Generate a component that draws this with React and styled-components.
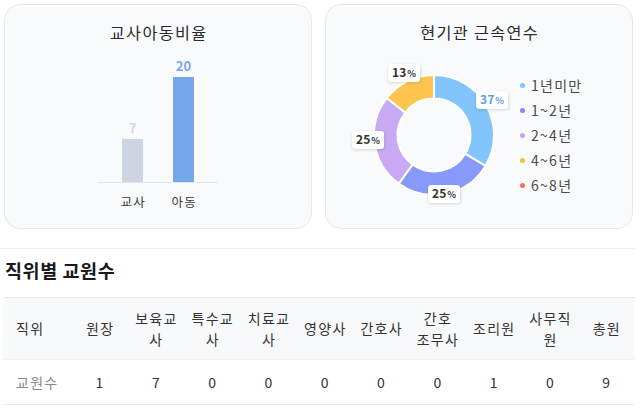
import styled, { createGlobalStyle } from "styled-components";

const GlobalStyle = createGlobalStyle`
    body {
        margin: 0;
        background: #ffffff;
        font-family: "Noto Sans CJK KR", "Noto Sans", sans-serif;
        letter-spacing: 0.08em;
        color: #333333;
    }
`;

const bars = [
    { label: "교사", value: 7, height: 43, color: "#cfd4e2", text: "#d3d9e8" },
    { label: "아동", value: 20, height: 105, color: "#76a7ea", text: "#7aa6e9" },
];

// angles measured clockwise from 12 o'clock, as drawn in the reference
const slices = [
    { from: 0, to: 121, color: "#82c4fc" },
    { from: 121, to: 216, color: "#8799fb" },
    { from: 216, to: 308, color: "#c8aaf4" },
    { from: 308, to: 360, color: "#fdc54e" },
];

const sliceLabels = [
    { value: 37, x: 128, y: 35, blue: true },
    { value: 25, x: 80, y: 129 },
    { value: 25, x: 4, y: 75 },
    { value: 13, x: 40, y: 8 },
];

const legend = [
    { label: "1년미만", color: "#82c4fc" },
    { label: "1~2년", color: "#7b8df9" },
    { label: "2~4년", color: "#c5a4f3" },
    { label: "4~6년", color: "#fbbf3d" },
    { label: "6~8년", color: "#f4735f" },
];

const columns = [
    { label: "원장" },
    { label: "보육교사" },
    { label: "특수교사" },
    { label: "치료교사" },
    { label: "영양사" },
    { label: "간호사" },
    { label: "간호 조무사", keep: true },
    { label: "조리원" },
    { label: "사무직원" },
    { label: "총원" },
];
const counts = [1, 7, 0, 0, 0, 0, 0, 1, 0, 9];

const arcPath = (cx, cy, R, r, a0, a1) => {
    const pt = (rad, a) => {
        const t = (a * Math.PI) / 180;
        return `${cx + rad * Math.sin(t)} ${cy - rad * Math.cos(t)}`;
    };
    const large = a1 - a0 > 180 ? 1 : 0;
    return `M ${pt(R, a0)} A ${R} ${R} 0 ${large} 1 ${pt(R, a1)} L ${pt(r, a1)} A ${r} ${r} 0 ${large} 0 ${pt(r, a0)} Z`;
};

const App = () => {
    return (
        <Page>
            <GlobalStyle />
            <Cards>
                <Card>
                    <CardTitle>교사아동비율</CardTitle>
                    <Plot>
                        {bars.map((b) => (
                            <BarColumn key={b.label}>
                                <BarValue $color={b.text}>{b.value}</BarValue>
                                <Bar $color={b.color} style={{ height: b.height }} />
                            </BarColumn>
                        ))}
                    </Plot>
                    <AxisLabels>
                        {bars.map((b) => (
                            <AxisLabel key={b.label}>{b.label}</AxisLabel>
                        ))}
                    </AxisLabels>
                </Card>
                <Card>
                    <CardTitle>현기관 근속연수</CardTitle>
                    <DonutBody>
                        <Donut>
                            <svg width="140" height="140" viewBox="0 0 140 140">
                                {slices.map((s) => (
                                    <path
                                        key={s.from}
                                        d={arcPath(70, 70, 60, 36.5, s.from, s.to)}
                                        fill={s.color}
                                        stroke="#ffffff"
                                        strokeWidth="2"
                                    />
                                ))}
                            </svg>
                            {sliceLabels.map((l, i) => (
                                <SliceLabel key={i} $blue={l.blue} style={{ left: l.x, top: l.y }}>
                                    {l.value}
                                    <small>%</small>
                                </SliceLabel>
                            ))}
                        </Donut>
                        <Legend>
                            {legend.map((l) => (
                                <LegendItem key={l.label}>
                                    <Dot $color={l.color} />
                                    {l.label}
                                </LegendItem>
                            ))}
                        </Legend>
                    </DonutBody>
                </Card>
            </Cards>

            <Section>
                <Heading>직위별 교원수</Heading>
                <Table>
                    <colgroup>
                        <col style={{ width: 69 }} />
                    </colgroup>
                    <thead>
                        <tr>
                            <HeadCell $first>직위</HeadCell>
                            {columns.map((c) => (
                                <HeadCell key={c.label} $keep={c.keep}>{c.label}</HeadCell>
                            ))}
                        </tr>
                    </thead>
                    <tbody>
                        <tr>
                            <BodyCell $first>교원수</BodyCell>
                            {counts.map((n, i) => (
                                <BodyCell key={i}>{n}</BodyCell>
                            ))}
                        </tr>
                    </tbody>
                </Table>
            </Section>
        </Page>
    );
};

const Page = styled.div`
    width: 640px;
    padding-top: 4px;
`;

const Cards = styled.div`
    display: flex;
    gap: 13px;
    padding: 0 7px 0 4px;
`;

const Card = styled.div`
    flex: 1;
    height: 225px;
    box-sizing: border-box;
    background: #f9fafc;
    border: 1px solid #e5e8ee;
    border-radius: 16px;
    padding-top: 15px;
    display: flex;
    flex-direction: column;
    align-items: center;
`;

const CardTitle = styled.div`
    font-size: 16.3px;
    line-height: 24px;
    color: #2b2b2b;
    padding-left: 0.08em;
`;

const Plot = styled.div`
    margin-top: 10px;
    height: 128px;
    width: 120px;
    display: flex;
    justify-content: center;
    align-items: flex-end;
    gap: 30px;
    border-bottom: 1px solid #e3e6ec;
`;

const BarColumn = styled.div`
    display: flex;
    flex-direction: column;
    align-items: center;
    width: 21px;
`;

const BarValue = styled.div`
    font-size: 13px;
    font-weight: 700;
    line-height: 16px;
    letter-spacing: 0;
    margin-bottom: 3px;
    color: ${(p) => p.$color};
`;

const Bar = styled.div`
    width: 21px;
    background: ${(p) => p.$color};
`;

const AxisLabels = styled.div`
    display: flex;
    justify-content: center;
    gap: 27px;
    margin-top: 10px;
`;

const AxisLabel = styled.div`
    width: 24px;
    text-align: center;
    font-size: 12.5px;
    line-height: 18px;
    color: #3a3a3a;
    white-space: nowrap;
`;

const DonutBody = styled.div`
    align-self: stretch;
    display: flex;
    align-items: center;
    padding-left: 38px;
    margin-top: 21px;
    gap: 16px;
`;

const Donut = styled.div`
    position: relative;
    width: 140px;
    height: 140px;

    svg {
        display: block;
    }
`;

const SliceLabel = styled.div`
    position: absolute;
    transform: translate(-50%, -50%);
    background: #ffffff;
    border-radius: 3px;
    box-shadow: 0 1px 3px rgba(0, 0, 0, 0.14);
    padding: 0 4px;
    font-size: 12px;
    font-weight: 700;
    line-height: 16px;
    letter-spacing: 0;
    white-space: nowrap;
    color: ${(p) => (p.$blue ? "#5c9fe6" : "#333333")};

    small {
        font-size: 9px;
        margin-left: 1px;
    }
`;

const Legend = styled.ul`
    list-style: none;
    margin: 0;
    padding: 0;
`;

const LegendItem = styled.li`
    display: flex;
    align-items: center;
    gap: 6px;
    height: 25px;
    font-size: 14px;
    color: #4a4a4a;
`;

const Dot = styled.span`
    width: 5px;
    height: 5px;
    border-radius: 50%;
    background: ${(p) => p.$color};
`;

const Section = styled.div`
    margin: 19px 5px 0 0;
    border-top: 1px solid #eeeff2;
    padding-top: 9px;
`;

const Heading = styled.h2`
    margin: 0 0 15px 5px;
    font-size: 18.5px;
    line-height: 24px;
    letter-spacing: 0.03em;
    font-weight: 700;
    color: #1a1a1a;
`;

const Table = styled.table`
    margin-left: 3px;
    width: 632px;
    table-layout: fixed;
    border-collapse: collapse;
    font-size: 14px;
    line-height: 21px;
`;

const HeadCell = styled.th`
    height: 61px;
    padding: 0 5px 0 ${(p) => (p.$first ? "13px" : "5px")};
    background: #f8f9fb;
    border-top: 1px solid #e6e8ec;
    border-bottom: 1px solid #f0f1f4;
    font-weight: 400;
    color: #333333;
    text-align: ${(p) => (p.$first ? "left" : "center")};
    vertical-align: middle;
    word-break: ${(p) => (p.$keep ? "keep-all" : "normal")};
`;

const BodyCell = styled.td`
    height: 44px;
    padding: 0 5px 0 ${(p) => (p.$first ? "13px" : "5px")};
    border-bottom: 1px solid #e6e8ec;
    color: ${(p) => (p.$first ? "#8a8a8a" : "#333333")};
    text-align: ${(p) => (p.$first ? "left" : "center")};
    vertical-align: middle;
`;

export default App;
